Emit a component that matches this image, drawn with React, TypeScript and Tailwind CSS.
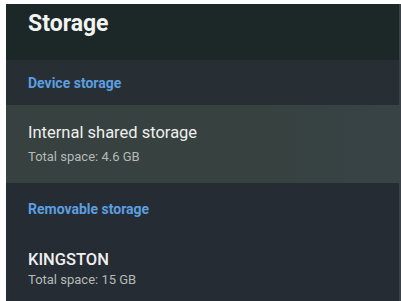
export default function App() {
  return (
    <div className="h-[301px] w-[401px] overflow-hidden bg-white pl-[6px] pt-[4px] font-['Roboto',sans-serif]">
      <div className="flex h-[297px] w-[395px] flex-col border-r-2 border-[#3a4248] bg-[#262c33]">
        <div className="h-[56px] shrink-0 bg-[#1c2728] pl-[22px] pt-[5px]">
          <h1 className="text-[23px] font-bold leading-[30px] text-[#f2f4f4]">Storage</h1>
        </div>
        <div className="flex h-[45px] shrink-0 items-center bg-[#272e34] pl-[22px] pt-[2px]">
          <span className="text-[14px] font-bold text-[#5b9fe0]">Device storage</span>
        </div>
        <div className="flex h-[78px] shrink-0 flex-col justify-center bg-gradient-to-r from-[#37413f] from-60% to-[#384346] pl-[22px]">
          <span className="text-[16.5px] leading-[20px] text-[#eef0ef]">Internal shared storage</span>
          <span className="mt-[6px] text-[13px] leading-[16px] text-[#b4bab8]">Total space: 4.6 GB</span>
        </div>
        <div className="flex h-[52px] shrink-0 items-center pl-[22px]">
          <span className="text-[14px] font-bold text-[#5b9fe0]">Removable storage</span>
        </div>
        <div className="flex flex-col pl-[22px] pt-[15px]">
          <span className="text-[16.5px] font-medium leading-[20px] text-[#eef0ef]">KINGSTON</span>
          <span className="mt-[2px] text-[13px] leading-[16px] text-[#b4bab8]">Total space: 15 GB</span>
        </div>
      </div>
    </div>
  );
}
